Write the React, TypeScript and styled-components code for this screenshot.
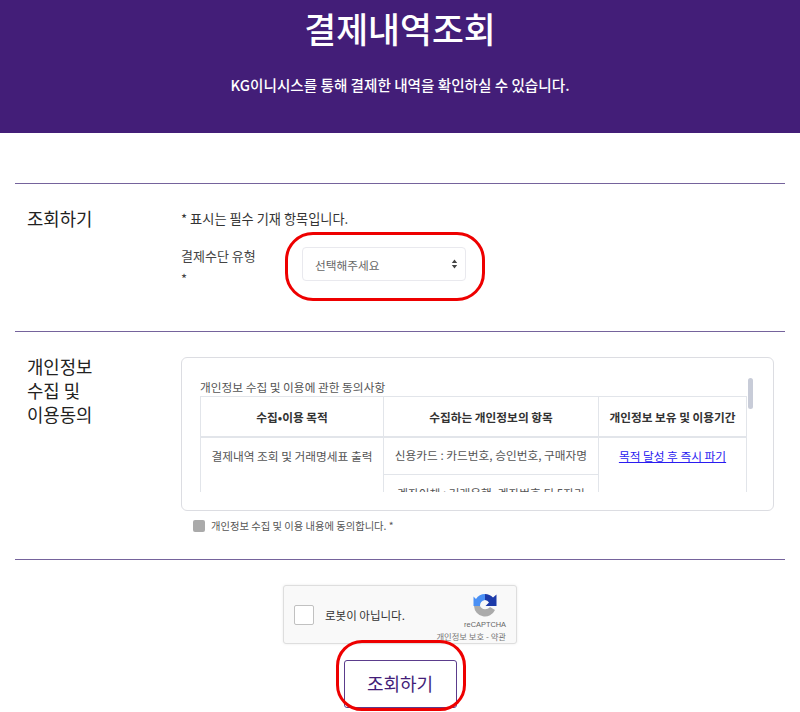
import React from 'react'
import styled, { createGlobalStyle } from 'styled-components'

const GlobalStyle = createGlobalStyle`
    html, body {
        margin: 0;
        padding: 0;
        background: #fff;
    }

    body {
        font-family: "Noto Sans CJK KR", "Noto Sans", sans-serif;
        color: #333;
        overflow: hidden;
    }

    * {
        box-sizing: border-box;
    }
`

const Hero = styled.header`
    height: 133px;
    background: #431e78;
    color: #fff;
    text-align: center;
    overflow: hidden;
`

const Title = styled.h1`
    margin: 4px 0 0;
    font-size: 34.7px;
    line-height: 48px;
    font-weight: 500;
`

const Subtitle = styled.p`
    margin: 22px 0 0;
    font-size: 14.6px;
    line-height: 22px;
    font-weight: 500;
`

const Main = styled.main`
    padding: 50px 15px 4px;
`

const Section = styled.section<{ $height: number }>`
    display: flex;
    height: ${({ $height }) => $height}px;
    border-top: 1px solid #75639c;
`

const SectionTitle = styled.h2`
    width: 166px;
    flex: none;
    margin: 0;
    padding: 22px 0 0 12px;
    font-size: 17.8px;
    line-height: 24px;
    font-weight: 400;
    color: #222;
`

const SectionBody = styled.div`
    width: 593px;
    padding-top: 25px;
`

const Notice = styled.p`
    margin: 0;
    font-size: 13.2px;
    line-height: 20px;
    color: #333;
`

const Field = styled.div`
    display: flex;
    margin-top: 15px;
`

const FieldLabel = styled.label`
    width: 121px;
    flex: none;
    font-size: 13px;
    line-height: 23px;
    color: #444;
`

const SelectWrap = styled.div`
    position: relative;
    width: 164px;
    height: 34px;
    margin-top: 3px;
`

const Select = styled.select`
    appearance: none;
    width: 100%;
    height: 100%;
    padding: 0 12px;
    border: 1px solid #e9e9ee;
    border-radius: 4px;
    background: #fff;
    font-family: inherit;
    font-size: 11.7px;
    color: #666;
`

const SelectArrows = styled.svg`
    position: absolute;
    right: 8px;
    top: 12px;
    width: 7px;
    height: 10px;
`

const Annotation = styled.span<{ $top: number; $left: number; $width: number; $height: number; $radius: number }>`
    position: absolute;
    top: ${({ $top }) => $top}px;
    left: ${({ $left }) => $left}px;
    width: ${({ $width }) => $width}px;
    height: ${({ $height }) => $height}px;
    border: 3px solid #ee0000;
    border-radius: ${({ $radius }) => $radius}px;
    pointer-events: none;
`

const AgreementBox = styled.div`
    position: relative;
    height: 154px;
    padding: 20px 26px 0 18px;
    border: 1px solid #dcdde2;
    border-radius: 6px;
`

const ScrollClip = styled.div`
    height: 114px;
    overflow: hidden;
`

const Caption = styled.div`
    font-size: 11.7px;
    line-height: 18px;
    color: #555;
`

const Table = styled.table`
    width: 546px;
    border-collapse: collapse;
    table-layout: fixed;
    font-size: 11.7px;
    color: #555;
`

const Th = styled.th`
    height: 40px;
    padding: 0;
    border: 1px solid #e2e5ea;
    border-bottom-width: 2px;
    font-size: 11.7px;
    font-weight: 700;
    color: #333;
    text-align: center;
`

const Td = styled.td`
    height: 38px;
    padding: 0 0 2px;
    border: 1px solid #e2e5ea;
    text-align: center;
    vertical-align: middle;
`

const TopTd = styled(Td)`
    vertical-align: top;
    padding-top: 9px;
`

const RetentionLink = styled.a`
    color: #2a1cf0;
    text-decoration: underline;
`

const Thumb = styled.span`
    position: absolute;
    top: 20px;
    right: 20px;
    width: 5px;
    height: 31px;
    border-radius: 3px;
    background: #c8ccd8;
`

const Consent = styled.div`
    display: flex;
    align-items: center;
    gap: 6px;
    margin: 8px 0 0 12px;
    font-size: 10.3px;
    line-height: 14px;
    color: #555;
`

const ConsentBox = styled.span`
    width: 12px;
    height: 12px;
    border-radius: 2px;
    background: #aaaaaa;
`

const Actions = styled.div`
    display: flex;
    flex-direction: column;
    align-items: center;
    padding-top: 25px;
    border-top: 1px solid #75639c;
`

const Captcha = styled.div`
    display: flex;
    align-items: center;
    position: relative;
    width: 234px;
    height: 59px;
    padding-left: 10px;
    border: 1px solid #dedede;
    border-radius: 3px;
    background: #f9f9f9;
    box-shadow: 0 0 3px rgba(0, 0, 0, 0.08);
`

const CaptchaCheck = styled.span`
    width: 20px;
    height: 20px;
    border: 1px solid #c1c1c1;
    border-radius: 2px;
    background: #fff;
`

const CaptchaLabel = styled.span`
    margin-left: 11px;
    font-size: 11.5px;
    color: #333;
`

const CaptchaBrand = styled.div`
    position: absolute;
    right: 10px;
    top: 7px;
    display: flex;
    flex-direction: column;
    align-items: flex-end;
    font-family: "Liberation Sans", sans-serif;
    color: #666;
    font-size: 7.4px;
    line-height: 10px;
`

const CaptchaLogo = styled.svg`
    width: 24px;
    height: 24px;
    margin: 0 9px 3px 0;
`

const CaptchaTerms = styled.span`
    margin-top: 1px;
    font-family: "Noto Sans CJK KR", sans-serif;
    font-size: 8.3px;
    color: #777;
    white-space: nowrap;
`

const ButtonWrap = styled.div`
    position: relative;
    margin-top: 16px;
`

const SubmitButton = styled.button`
    display: block;
    width: 113px;
    height: 48px;
    padding: 0 0 3px;
    border: 1px solid #5b3c8c;
    border-radius: 3px;
    background: #fff;
    font-family: inherit;
    font-size: 18px;
    color: #431e78;
`

export default function App() {
    return (
        <>
            <GlobalStyle />
            <Hero>
                <Title>결제내역조회</Title>
                <Subtitle>KG이니시스를 통해 결제한 내역을 확인하실 수 있습니다.</Subtitle>
            </Hero>
            <Main>
                <Section $height={148}>
                    <SectionTitle>조회하기</SectionTitle>
                    <SectionBody>
                        <Notice>* 표시는 필수 기재 항목입니다.</Notice>
                        <Field>
                            <FieldLabel>
                                결제수단 유형
                                <br />*
                            </FieldLabel>
                            <SelectWrap>
                                <Select defaultValue="">
                                    <option value="">선택해주세요</option>
                                </Select>
                                <SelectArrows viewBox="0 0 7 10">
                                    <path d="M3.5 0.5 L6.2 4 H0.8 Z M3.5 9.5 L0.8 6 H6.2 Z" fill="#444" />
                                </SelectArrows>
                                <Annotation $top={-15} $left={-17} $width={200} $height={69} $radius={28} />
                            </SelectWrap>
                        </Field>
                    </SectionBody>
                </Section>
                <Section $height={228}>
                    <SectionTitle>
                        개인정보
                        <br />
                        수집 및
                        <br />
                        이용동의
                    </SectionTitle>
                    <SectionBody>
                        <AgreementBox>
                            <ScrollClip>
                                <Caption>개인정보 수집 및 이용에 관한 동의사항</Caption>
                                <Table>
                                    <colgroup>
                                        <col style={{ width: 183 }} />
                                        <col style={{ width: 215 }} />
                                        <col style={{ width: 148 }} />
                                    </colgroup>
                                    <thead>
                                        <tr>
                                            <Th>수집•이용 목적</Th>
                                            <Th>수집하는 개인정보의 항목</Th>
                                            <Th>개인정보 보유 및 이용기간</Th>
                                        </tr>
                                    </thead>
                                    <tbody>
                                        <tr>
                                            <TopTd rowSpan={2}>결제내역 조회 및 거래명세표 출력</TopTd>
                                            <Td>신용카드 : 카드번호, 승인번호, 구매자명</Td>
                                            <TopTd rowSpan={2}>
                                                <RetentionLink href="#">목적 달성 후 즉시 파기</RetentionLink>
                                            </TopTd>
                                        </tr>
                                        <tr>
                                            <Td>계좌이체 : 거래은행, 계좌번호 뒤 5자리</Td>
                                        </tr>
                                    </tbody>
                                </Table>
                            </ScrollClip>
                            <Thumb />
                        </AgreementBox>
                        <Consent>
                            <ConsentBox />
                            개인정보 수집 및 이용 내용에 동의합니다. *
                        </Consent>
                    </SectionBody>
                </Section>
                <Actions>
                    <Captcha>
                        <CaptchaCheck />
                        <CaptchaLabel>로봇이 아닙니다.</CaptchaLabel>
                        <CaptchaBrand>
                            <CaptchaLogo viewBox="0 0 24 24">
                                <path d="M1 13 A11 11 0 0 0 22 17 L17 14 A6 6 0 0 1 7 13 Z" fill="#ababab" />
                                <path d="M12 1 A11 11 0 0 0 3 6 L0.5 3.5 V13 H7 A6 6 0 0 1 12 7 Z" fill="#4a90f5" />
                                <path d="M12 1 A11 11 0 0 1 20 4.5 L23.5 1.5 V13 H12.5 L16 9.5 A6 6 0 0 0 12 7 Z" fill="#1c3aa9" />
                            </CaptchaLogo>
                            reCAPTCHA
                            <CaptchaTerms>개인정보 보호 - 약관</CaptchaTerms>
                        </CaptchaBrand>
                    </Captcha>
                    <ButtonWrap>
                        <SubmitButton>조회하기</SubmitButton>
                        <Annotation $top={-20} $left={-8} $width={130} $height={71} $radius={26} />
                    </ButtonWrap>
                </Actions>
            </Main>
        </>
    )
}
